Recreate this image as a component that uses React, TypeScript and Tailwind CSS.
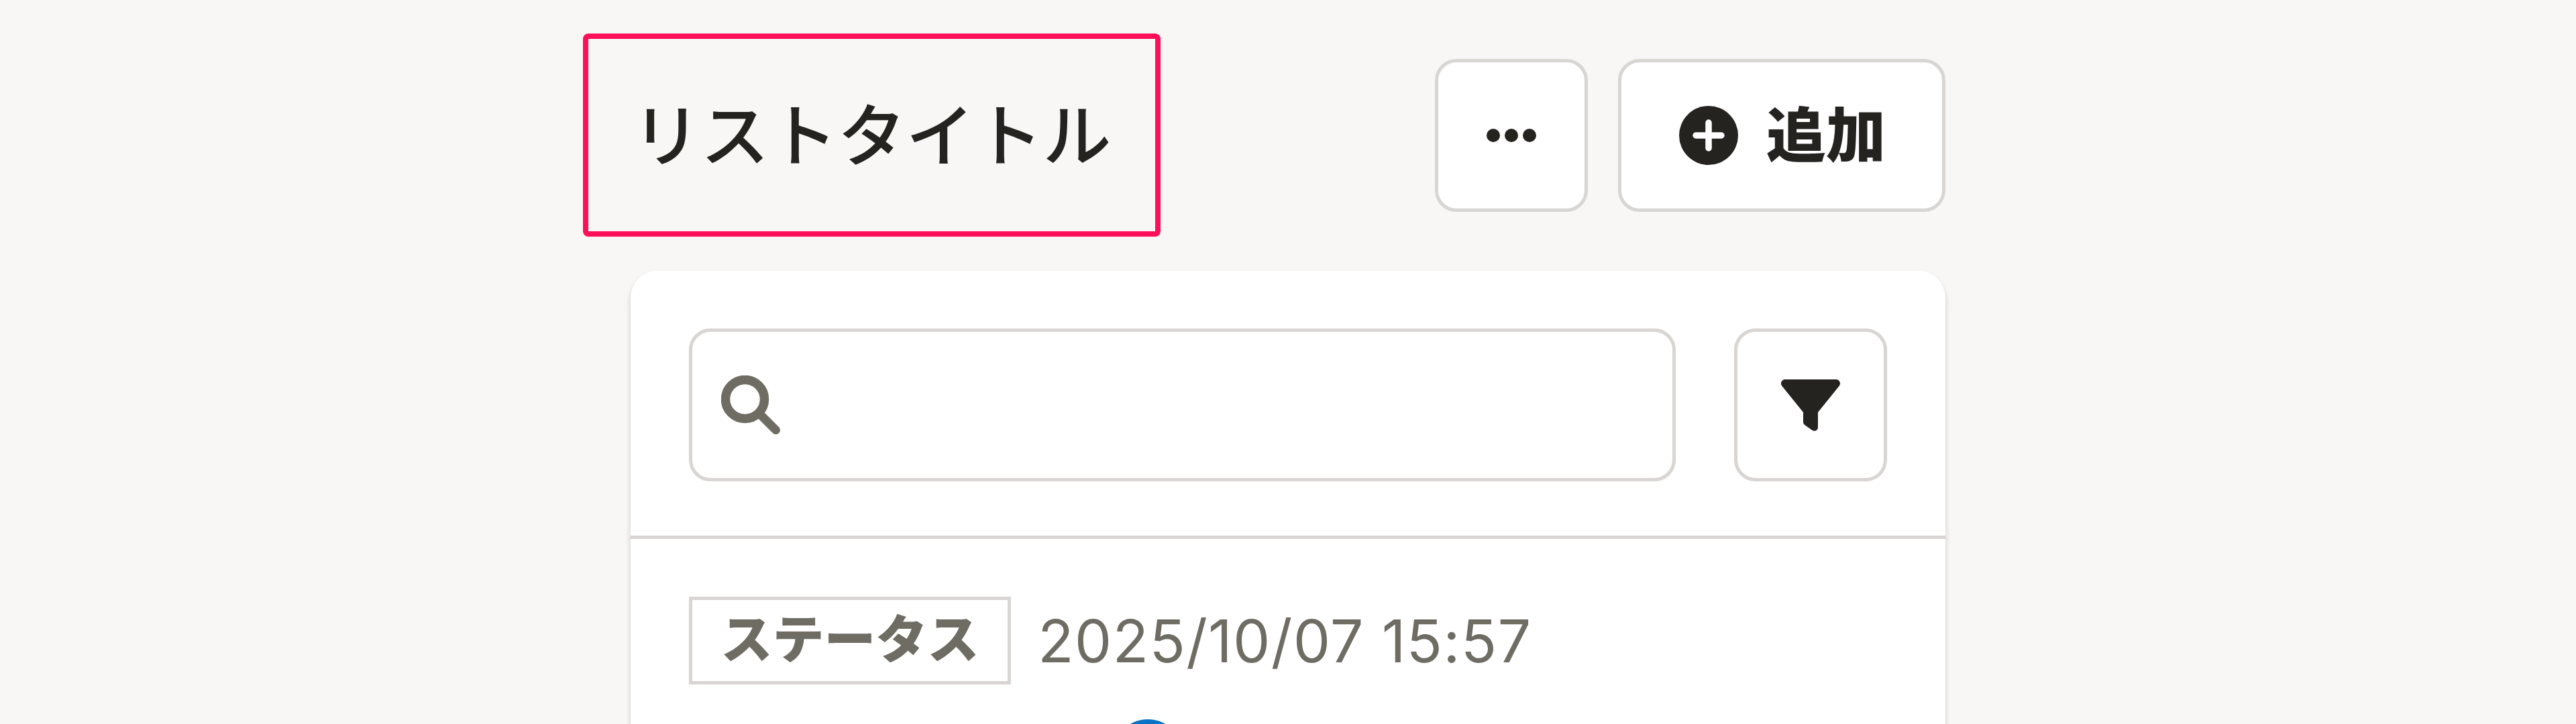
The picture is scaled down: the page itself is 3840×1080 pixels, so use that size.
const btn = "flex h-[228px] items-center justify-center rounded-[32px] border-[5px] border-[#d8d5d2] bg-white";

function PlusIcon() {
  return (
    <svg width="88" height="88" viewBox="0 0 88 88" className="shrink-0">
      <circle cx="44" cy="44" r="44" fill="#24231f" />
      <path d="M25 44H63M44 25V63" stroke="#fff" strokeWidth="9.5" strokeLinecap="round" />
    </svg>
  );
}

function SearchIcon() {
  return (
    <svg width="88" height="88" viewBox="0 0 88 88" className="shrink-0" fill="none" stroke="#6f6d63">
      <circle cx="35.5" cy="35.5" r="29" strokeWidth="13.5" />
      <path d="M56 56L81.5 81.5" strokeWidth="13" strokeLinecap="round" />
    </svg>
  );
}

function FilterIcon() {
  return (
    <svg width="88" height="77" viewBox="0 0 88 77">
      <path
        fill="#24231f"
        d="M6 0H82C87 0 90 6 86.5 10L55 49V71C55 76 50 78.5 46 75.5L36 68.5C34 67 33 65.5 33 63V49L1.5 10C-2 6 1 0 6 0Z"
      />
    </svg>
  );
}

export default function App() {
  return (
    <div className="h-[1080px] w-[3840px] overflow-hidden bg-[#f8f7f5] font-['Liberation_Sans','Noto_Sans_CJK_JP',sans-serif] text-[#24231f]">
      <div className="mx-auto w-[1960px] pt-[50px]">
        <header className="flex items-center justify-between">
          <div className="-ml-[71px] flex h-[303px] w-[861px] items-center justify-center rounded-[8px] border-[8px] border-[#ff0f5a] pt-[6px]">
            <h1 className="whitespace-nowrap text-[102px] font-medium leading-none">リストタイトル</h1>
          </div>
          <div className="flex gap-[45px]">
            <button className={`${btn} w-[228px] gap-[7px]`}>
              <span className="h-[20px] w-[20px] rounded-full bg-[#24231f]" />
              <span className="h-[20px] w-[20px] rounded-full bg-[#24231f]" />
              <span className="h-[20px] w-[20px] rounded-full bg-[#24231f]" />
            </button>
            <button className={`${btn} w-[488px] !justify-start gap-[42px] pl-[86px]`}>
              <PlusIcon />
              <span className="pt-[4px] text-[89px] font-black leading-none">追加</span>
            </button>
          </div>
        </header>

        <section className="mt-[51px] rounded-t-[40px] bg-white shadow-[0_6px_8px_rgba(0,0,0,0.18)]">
          <div className="flex gap-[87px] border-b-[5px] border-[#d8d5d2] px-[87px] pb-[81px] pt-[86px]">
            <div className={`${btn} flex-1 !justify-start pl-[43px]`}>
              <SearchIcon />
            </div>
            <button className={`${btn} w-[228px]`}>
              <FilterIcon />
            </button>
          </div>

          <div className="px-[87px] pt-[86px]">
            <div className="flex items-center gap-[40px]">
              <span className="flex h-[131px] w-[480px] items-center justify-center border-[5px] border-[#d8d5d2] text-[77px] font-black leading-none text-[#6f6d63]">
                ステータス
              </span>
              <span className="font-['Inter','Noto_Sans_CJK_JP',sans-serif] text-[88px] font-normal leading-none tracking-[1.2px] text-[#6f6d63]">2025/10/07 15:57</span>
            </div>
            <div className="ml-[631px] mt-[52px] h-[106px] w-[106px] rounded-full bg-[#0873c4]" />
          </div>
        </section>
      </div>
    </div>
  );
}
